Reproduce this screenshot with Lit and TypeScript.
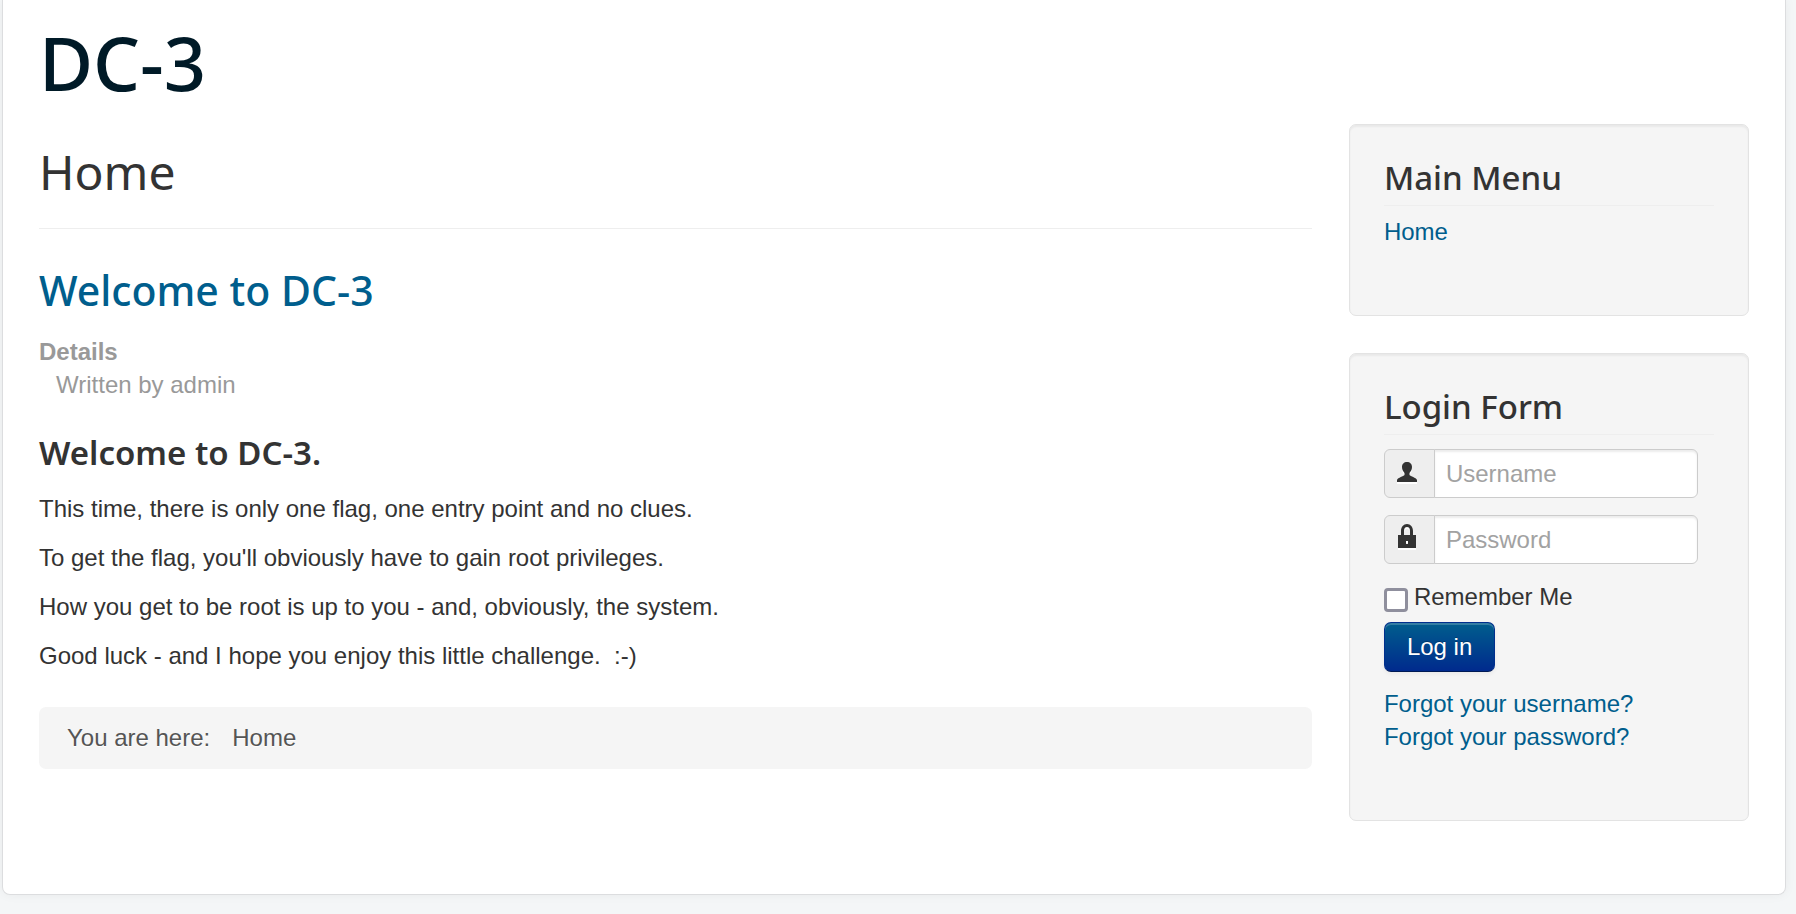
import { LitElement, html, css, svg } from "lit";
import { customElement } from "lit/decorators.js";

const userIcon = svg`<path d="M10 0C7 0 5 2 5 5C5 8 6.300 9.300 7.500 11V13C6.500 14.600 1 15.300 0 18V20H20V18C19 15.300 13.500 14.600 12.500 13V11C13.700 9.300 15 8 15 5C15 2 13 0 10 0Z"/>`;
const lockIcon = svg`<path fill-rule="evenodd" d="M3 11V7C3 3 5.500 0 9 0S15 3 15 7V11H18V24H0V11ZM6 11H12V7C12 4.500 11 3 9 3S6 4.500 6 7ZM8 17V20H10V17Z"/>`;

const paragraphs = [
  "This time, there is only one flag, one entry point and no clues.",
  "To get the flag, you'll obviously have to gain root privileges.",
  "How you get to be root is up to you - and, obviously, the system.",
  "Good luck - and I hope you enjoy this little challenge.\u00a0 :-)",
];

@customElement("app-root")
export class AppRoot extends LitElement {
  static styles = css`
    :host {
      display: block;
      box-sizing: border-box;
      min-height: 100vh;
      padding: 0 10px 19px 2px;
      background: #f4f6f7;
      color: #333;
      font: 24px/33px "Liberation Sans", Arial, sans-serif;
    }
    * { box-sizing: border-box; }
    h1, h2, h3, p, dl, dd, ul { margin: 0; padding: 0; }
    h1, h2, h3, .brand { font-family: "Noto Sans", "Open Sans", sans-serif; }
    ul { list-style: none; }
    a { color: #005e8d; text-decoration: none; }
    a:hover { text-decoration: underline; }
    .container {
      padding: 26px 36px 73px;
      background: #fff;
      border: 1px solid #dcdddf;
      border-top: 0;
      border-radius: 0 0 8px 8px;
      box-shadow: 0 0 11px rgba(0, 0, 0, 0.05);
    }
    .brand {
      display: inline-block;
      vertical-align: top;
      color: #001a27;
      font-size: 74px;
      line-height: 73px;
      font-weight: 500;
    }
    .brand:hover { text-decoration: none; }
    .columns {
      display: grid;
      grid-template-columns: minmax(0, 1fr) 23.4%;
      gap: 37px;
      align-items: start;
      margin-top: 25px;
    }
    .page-title {
      padding: 11px 0 20px;
      border-bottom: 1px solid #eee;
      font-size: 48px;
      line-height: 73px;
      font-weight: 400;
    }
    .article-title {
      margin: 43px 0 26px;
      font-size: 41px;
      line-height: 37px;
      font-weight: 500;
    }
    .details { color: #999; }
    .details dt { font-weight: 700; }
    .details dd { padding-left: 17px; }
    .subtitle {
      font-size: 33px;
      line-height: 37px;
      font-weight: 500;
    }
    .article-body {
      display: grid;
      gap: 16px;
      margin-top: 21px;
    }
    .article .subtitle { margin-top: 33px; font-weight: 600; }
    .breadcrumb {
      display: flex;
      gap: 22px;
      margin-top: 35px;
      padding: 14px 28px 15px;
      border-radius: 7px;
      background: #f5f5f5;
      color: #555;
      text-shadow: 0 1px 0 #fff;
    }
    .sidebar { display: grid; gap: 37px; }
    .well {
      padding: 34px 34px 67px;
      border: 1px solid #e3e3e3;
      border-radius: 7px;
      background: #f5f5f5;
      box-shadow: inset 0 2px 2px rgba(0, 0, 0, 0.05);
    }
    .well .subtitle {
      padding-bottom: 9px;
      border-bottom: 1px solid #eee;
    }
    .menu { margin-top: 9px; }
    .login { margin-top: 14px; }
    .fields { display: grid; gap: 17px; margin-bottom: 16px; }
    .field {
      display: flex;
      width: 314px;
      max-width: 100%;
    }
    .addon {
      display: flex;
      justify-content: center;
      flex: 0 0 51px;
      padding: 8px 4px 0 0;
      border: 1px solid #ccc;
      border-radius: 6px 0 0 6px;
      background: #eee;
    }
    .icon {
      display: block;
      fill: #333;
      filter: drop-shadow(0 2px 0 #fff);
    }
    .user { width: 20px; height: 20px; margin-top: 4px; }
    .lock { width: 18px; height: 24px; }
    .input {
      flex: 1;
      min-width: 0;
      margin-left: -1px;
      padding: 7px 11px;
      height: 49px;
      border: 1px solid #ccc;
      border-radius: 0 6px 6px 0;
      background: #fff;
      color: #555;
      font: inherit;
      box-shadow: inset 0 2px 2px rgba(0, 0, 0, 0.075);
    }
    .input::placeholder { color: #a2a2a2; opacity: 1; }
    .remember { display: flex; gap: 6px; margin-bottom: 9px; }
    .check {
      appearance: none;
      width: 24px;
      height: 24px;
      margin: 8px 0 0;
      border: 3px solid #8f8f9d;
      border-radius: 4px;
      background: #fff;
    }
    .check:checked { background: #005e8d; }
    .button {
      display: block;
      margin-bottom: 15px;
      padding: 7px 22px 8px;
      border: 1px solid #002f8d;
      border-bottom-color: #001a55;
      border-radius: 7px;
      background: linear-gradient(#005e8d, #002a8d);
      color: #fff;
      font: inherit;
      text-shadow: 0 -1px 0 rgba(0, 0, 0, 0.25);
      box-shadow: inset 0 2px 0 rgba(255, 255, 255, 0.2), 0 2px 4px rgba(0, 0, 0, 0.05);
    }
    @media (max-width: 1000px) {
      .columns { grid-template-columns: minmax(0, 1fr); }
    }
  `;

  render() {
    return html`
      <div class="container">
        <header><a class="brand" href="#">DC-3</a></header>
        <div class="columns">
          <main>
            <h1 class="page-title">Home</h1>
            <article class="article">
              <h2 class="article-title"><a href="#">Welcome to DC-3</a></h2>
              <dl class="details">
                <dt>Details</dt>
                <dd>Written by admin</dd>
              </dl>
              <h3 class="subtitle">Welcome to DC-3.</h3>
              <div class="article-body">
                ${paragraphs.map((text) => html`<p>${text}</p>`)}
              </div>
            </article>
            <ul class="breadcrumb" aria-label="Breadcrumb">
              <li>You are here:</li>
              <li>Home</li>
            </ul>
          </main>
          <aside class="sidebar">
            <nav class="well">
              <h3 class="subtitle">Main Menu</h3>
              <ul class="menu">
                <li><a href="#">Home</a></li>
              </ul>
            </nav>
            <section class="well">
              <h3 class="subtitle">Login Form</h3>
              <form class="login" @submit=${(e: Event) => e.preventDefault()}>
                <div class="fields">
                  <div class="field">
                    <label class="addon" for="username" aria-label="Username">
                      <svg class="icon user" viewBox="0 0 20 20" aria-hidden="true">${userIcon}</svg>
                    </label>
                    <input class="input" id="username" type="text" placeholder="Username" />
                  </div>
                  <div class="field">
                    <label class="addon" for="password" aria-label="Password">
                      <svg class="icon lock" viewBox="0 0 18 24" aria-hidden="true">${lockIcon}</svg>
                    </label>
                    <input class="input" id="password" type="password" placeholder="Password" />
                  </div>
                </div>
                <div class="remember">
                  <input class="check" id="remember" type="checkbox" />
                  <label for="remember">Remember Me</label>
                </div>
                <button class="button" type="submit">Log in</button>
                <ul>
                  <li><a href="#">Forgot your username?</a></li>
                  <li><a href="#">Forgot your password?</a></li>
                </ul>
              </form>
            </section>
          </aside>
        </div>
      </div>
    `;
  }
}
